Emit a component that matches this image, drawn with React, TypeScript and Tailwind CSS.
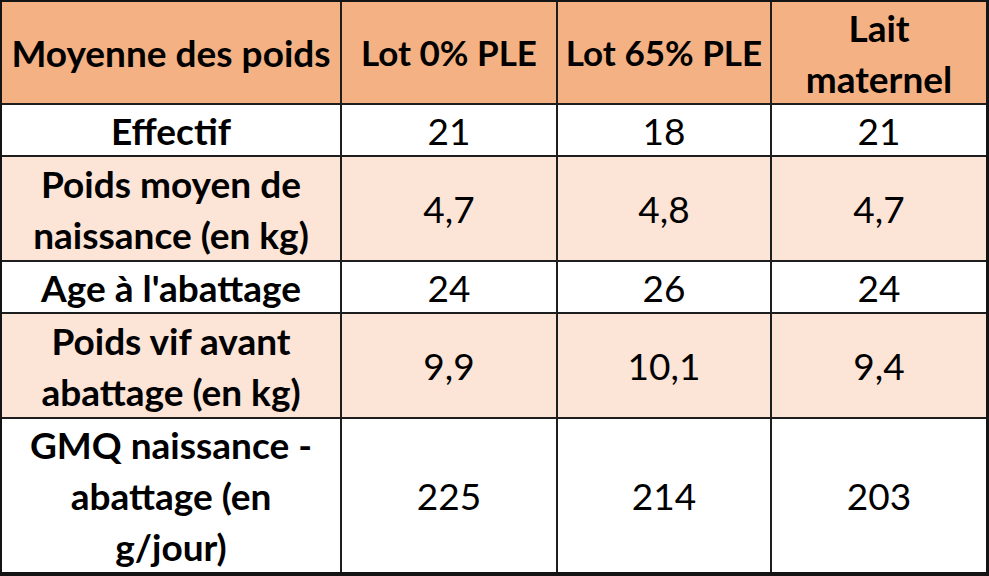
const header = ['Moyenne des poids', 'Lot 0% PLE', 'Lot 65% PLE', 'Lait maternel'];

type Row = { label: string[]; values: string[]; tinted: boolean; h: string };

const rows: Row[] = [
  { label: ['Effectif'], values: ['21', '18', '21'], tinted: false, h: 'h-[50px]' },
  { label: ['Poids moyen de', 'naissance (en kg)'], values: ['4,7', '4,8', '4,7'], tinted: true, h: 'h-[103px]' },
  { label: ["Age à l'abattage"], values: ['24', '26', '24'], tinted: false, h: 'h-[50px]' },
  { label: ['Poids vif avant', 'abattage (en kg)'], values: ['9,9', '10,1', '9,4'], tinted: true, h: 'h-[103px]' },
  { label: ['GMQ naissance -', 'abattage (en', 'g/jour)'], values: ['225', '214', '203'], tinted: false, h: 'h-[153px]' },
];

function Cell({ lines, bold, bg, h, size = 'text-[37px]' }: { lines: string[]; bold?: boolean; bg: string; h: string; size?: string }) {
  return (
    <div className={`${bg} ${h} ${size} flex flex-col items-center justify-center text-center leading-[51px] ${bold ? 'font-bold' : 'font-normal'}`}>
      {lines.map((l) => (
        <span key={l} className="whitespace-nowrap">{l}</span>
      ))}
    </div>
  );
}

export default function App() {
  return (
    <div className="w-[989px] h-[576px] bg-white font-['Lato',sans-serif] text-black">
      <div className="border-t-2 border-l-2 border-r-[3px] border-b-4 border-[#141414] bg-[#1e1e1e]">
        <div className="grid grid-cols-[338px_214px_212px_214px] gap-[2px]">
          <Cell lines={[header[0]]} bold bg="bg-[#f4b183]" h="h-[101px]" />
          <Cell lines={[header[1]]} bold bg="bg-[#f4b183]" h="h-[101px]" size="text-[35px]" />
          <Cell lines={[header[2]]} bold bg="bg-[#f4b183]" h="h-[101px]" size="text-[35px]" />
          <Cell lines={['Lait', 'maternel']} bold bg="bg-[#f4b183]" h="h-[101px]" />
          {rows.map((r) => {
            const bg = r.tinted ? 'bg-[#fce4d6]' : 'bg-white';
            return [
              <Cell key={r.label[0]} lines={r.label} bold bg={bg} h={r.h} />,
              ...r.values.map((v, i) => <Cell key={r.label[0] + i} lines={[v]} bg={bg} h={r.h} />),
            ];
          })}
        </div>
      </div>
    </div>
  );
}
